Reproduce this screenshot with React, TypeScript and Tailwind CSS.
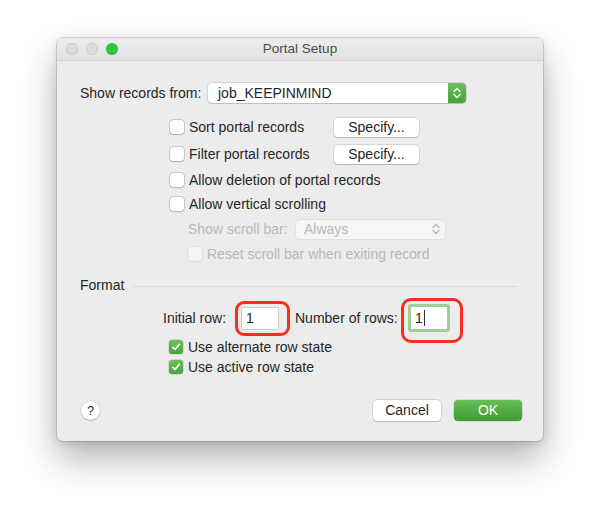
import React from "react";

function Checkbox({ checked = false, disabled = false }: { checked?: boolean; disabled?: boolean }) {
  if (checked) {
    return (
      <span className="flex h-[14px] w-[14px] shrink-0 items-center justify-center rounded-[3px] bg-gradient-to-b from-[#6cc05a] to-[#4aa43a] shadow-[0_0_0_0.5px_rgba(0,0,0,0.2)]">
        <svg width="10" height="10" viewBox="0 0 10 10">
          <path d="M1.8 5.3 L4 7.5 L8.3 2.4" fill="none" stroke="#fff" strokeWidth="1.7" strokeLinecap="round" strokeLinejoin="round" />
        </svg>
      </span>
    );
  }
  return (
    <span
      className={
        disabled
          ? "h-[14px] w-[14px] shrink-0 rounded-[3px] bg-[#f4f4f4] shadow-[0_0_0_0.5px_rgba(0,0,0,0.12)]"
          : "h-[14px] w-[14px] shrink-0 rounded-[3px] bg-white shadow-[0_0_0_0.5px_rgba(0,0,0,0.3),0_1px_1px_rgba(0,0,0,0.12)]"
      }
    />
  );
}

function PushButton({ children, className = "" }: { children: React.ReactNode; className?: string }) {
  return (
    <div
      className={
        "flex items-center justify-center rounded-[4px] bg-white text-[14px] text-[#262626] shadow-[0_0_0_0.5px_rgba(0,0,0,0.2),0_1px_1px_rgba(0,0,0,0.15)] " +
        className
      }
    >
      {children}
    </div>
  );
}

function Chevrons({ color }: { color: string }) {
  return (
    <svg width="8" height="12" viewBox="0 0 8 12">
      <path d="M1 4.5 L4 1.5 L7 4.5" fill="none" stroke={color} strokeWidth="1.4" strokeLinecap="round" strokeLinejoin="round" />
      <path d="M1 7.5 L4 10.5 L7 7.5" fill="none" stroke={color} strokeWidth="1.4" strokeLinecap="round" strokeLinejoin="round" />
    </svg>
  );
}

export default function App() {
  return (
    <div className="h-[517px] w-[600px] overflow-hidden bg-white pl-[57px] pt-[38px] font-['Liberation_Sans',Arial,sans-serif] text-[14px] text-[#262626]">
      <div className="flex h-[403px] w-[486px] flex-col overflow-hidden rounded-[5px] bg-[#ececec] shadow-[0_0_0_0.5px_rgba(0,0,0,0.25),0_18px_36px_rgba(0,0,0,0.3),0_2px_8px_rgba(0,0,0,0.12)]">
        {/* title bar */}
        <div className="relative flex h-[23px] shrink-0 items-center border-b border-[#d3d3d3] bg-gradient-to-b from-[#ececec] to-[#e3e3e3]">
          <div className="flex gap-[8px] pl-[9px]">
            <span className="h-[12px] w-[12px] rounded-full bg-[#dcdcdc] shadow-[inset_0_0_0_0.5px_rgba(0,0,0,0.15)]" />
            <span className="h-[12px] w-[12px] rounded-full bg-[#dcdcdc] shadow-[inset_0_0_0_0.5px_rgba(0,0,0,0.15)]" />
            <span className="h-[12px] w-[12px] rounded-full bg-[#2ac940] shadow-[inset_0_0_0_0.5px_rgba(0,0,0,0.12)]" />
          </div>
          <div className="absolute inset-0 flex items-center justify-center pt-[1px] text-[13.5px] text-[#4d4d4d]">Portal Setup</div>
        </div>

        {/* body */}
        <div className="flex flex-1 flex-col">
          {/* show records from */}
          <div className="mt-[22px] flex h-[20px] items-center pl-[23px]">
            <span className="w-[128px]">Show records from:</span>
            <div className="flex h-[20px] w-[258px] items-center overflow-hidden rounded-[4px] bg-white shadow-[0_0_0_0.5px_rgba(0,0,0,0.2),0_1px_1px_rgba(0,0,0,0.12)]">
              <span className="flex-1 pl-[10px]">job_KEEPINMIND</span>
              <span className="flex h-[20px] w-[18px] items-center justify-center bg-gradient-to-b from-[#6dc15b] to-[#46a236]">
                <Chevrons color="#ffffff" />
              </span>
            </div>
          </div>

          {/* checkbox section */}
          <div className="mt-[14px] flex h-[20px] items-center pl-[113px]">
            <div className="flex w-[164px] items-center gap-[5px]">
              <Checkbox />
              <span>Sort portal records</span>
            </div>
            <PushButton className="h-[19px] w-[85px]">Specify...</PushButton>
          </div>
          <div className="mt-[7px] flex h-[20px] items-center pl-[113px]">
            <div className="flex w-[164px] items-center gap-[5px]">
              <Checkbox />
              <span>Filter portal records</span>
            </div>
            <PushButton className="h-[19px] w-[85px]">Specify...</PushButton>
          </div>
          <div className="mt-[6px] flex h-[20px] items-center gap-[5px] pl-[113px]">
            <Checkbox />
            <span>Allow deletion of portal records</span>
          </div>
          <div className="mt-[4px] flex h-[20px] items-center gap-[5px] pl-[113px]">
            <Checkbox />
            <span>Allow vertical scrolling</span>
          </div>
          <div className="mt-[5px] flex h-[20px] items-center pl-[131px] text-[#b8b8b8]">
            <span className="w-[108px]">Show scroll bar:</span>
            <div className="flex h-[19px] w-[149px] items-center rounded-[4px] bg-[#f6f6f6] pl-[8px] pr-[5px] shadow-[0_0_0_0.5px_rgba(0,0,0,0.1)]">
              <span className="flex-1">Always</span>
              <Chevrons color="#b5b5b5" />
            </div>
          </div>
          <div className="mt-[5px] flex h-[20px] items-center gap-[5px] pl-[131px] text-[#b8b8b8]">
            <Checkbox disabled />
            <span>Reset scroll bar when exiting record</span>
          </div>

          {/* format */}
          <div className="mt-[12px] flex h-[18px] items-center pl-[23px] pr-[25px]">
            <span className="w-[53px]">Format</span>
            <div className="mt-[2px] h-px flex-1 bg-[#d8d8d8]" />
          </div>

          <div className="mt-[10px] flex h-[28px] items-center pl-[106px]">
            <span className="w-[79px]">Initial row:</span>
            <div className="relative">
              <div className="flex h-[21px] w-[36px] items-center bg-white pl-[4px] shadow-[0_0_0_0.5px_rgba(0,0,0,0.25)]">1</div>
              <div className="absolute bottom-[-7px] left-[-7px] right-[-12px] top-[-7px] rounded-[9px] border-[3px] border-[#ff2b1c]" />
            </div>
            <span className="ml-[17px] w-[113px]">Number of rows:</span>
            <div className="relative">
              <div className="flex h-[28px] w-[42px] items-center rounded-[3px] border-[3px] border-[#9dcf96] bg-white pl-[4px]">
                1<span className="ml-[1px] h-[16px] w-px bg-[#333]" />
              </div>
              <div className="absolute bottom-[-11px] left-[-7px] right-[-13px] top-[-6px] rounded-[10px] border-[3px] border-[#ff2b1c]" />
            </div>
          </div>

          <div className="mt-[5px] flex h-[20px] items-center gap-[5px] pl-[112px]">
            <Checkbox checked />
            <span>Use alternate row state</span>
          </div>
          <div className="flex h-[20px] items-center gap-[5px] pl-[112px]">
            <Checkbox checked />
            <span>Use active row state</span>
          </div>

          {/* buttons */}
          <div className="mb-[20px] mt-auto flex h-[21px] items-center pl-[24px] pr-[21px]">
            <div className="flex h-[19px] w-[19px] items-center justify-center rounded-full bg-white text-[12px] shadow-[0_0_0_0.5px_rgba(0,0,0,0.2),0_1px_1px_rgba(0,0,0,0.15)]">
              ?
            </div>
            <div className="flex-1" />
            <PushButton className="h-[21px] w-[68px]">Cancel</PushButton>
            <div className="ml-[13px] flex h-[21px] w-[68px] items-center justify-center rounded-[4px] bg-gradient-to-b from-[#68bd56] to-[#3f9a31] text-white shadow-[0_0_0_0.5px_rgba(0,0,0,0.15)]">
              OK
            </div>
          </div>
        </div>
      </div>
    </div>
  );
}
